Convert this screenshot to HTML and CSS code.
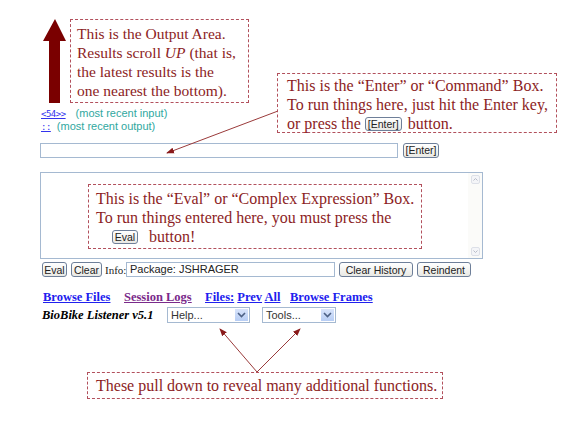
FILE: index.html
```html
<!DOCTYPE html>
<html>
<head>
<meta charset="utf-8">
<link rel="stylesheet" href="styles.css">
</head>
<body>
<div class="page">
  <div class="output-area"></div>
  <div class="hist">
    <div class="hist-line"><a class="hist-link" href="#">&lt;54&gt;&gt;</a><span class="hist-note">(most recent input)</span></div>
    <div class="hist-line"><a class="hist-link" href="#">::</a><span class="hist-note hist-note-tight">(most recent output)</span></div>
  </div>
  <div class="cmd-row">
    <div class="field cmd-field"></div>
    <button class="btn btn-enter">[Enter]</button>
  </div>
  <div class="eval-box">
    <div class="eval-text"></div>
    <div class="scrollbar">
      <span class="sb-arrow"><svg width="9" height="9" viewBox="0 0 9 9"><rect x="0.5" y="0.5" width="8" height="8" rx="1.5" fill="#f4f5f8" stroke="#dde0e8"/><path d="M2.5 5.5 L4.5 3.5 L6.5 5.5" fill="none" stroke="#b8bcc8" stroke-width="1"/></svg></span>
      <span class="sb-arrow"><svg width="9" height="9" viewBox="0 0 9 9"><rect x="0.5" y="0.5" width="8" height="8" rx="1.5" fill="#f4f5f8" stroke="#dde0e8"/><path d="M2.5 3.5 L4.5 5.5 L6.5 3.5" fill="none" stroke="#b8bcc8" stroke-width="1"/></svg></span>
    </div>
  </div>
  <div class="btn-row">
    <button class="btn btn-eval">Eval</button>
    <button class="btn btn-clear">Clear</button>
    <span class="info-label">Info:</span>
    <div class="field info-field">Package: JSHRAGER</div>
    <button class="btn btn-hist">Clear History</button>
    <button class="btn btn-reindent">Reindent</button>
  </div>
  <div class="links">
    <a href="#" class="lnk">Browse Files</a>
    <a href="#" class="lnk visited">Session Logs</a>
    <span class="lnk-group"><a href="#" class="lnk">Files:</a> <a href="#" class="lnk">Prev</a> <a href="#" class="lnk">All</a></span>
    <a href="#" class="lnk">Browse Frames</a>
  </div>
  <div class="tools-row">
    <span class="title">BioBike Listener v5.1</span>
    <div class="select sel-help"><span class="sel-text">Help...</span><span class="sel-btn"><svg width="9" height="6" viewBox="0 0 9 6"><path d="M1 1 L4.5 4.5 L8 1" fill="none" stroke="#4d6185" stroke-width="1.6"/></svg></span></div>
    <div class="select sel-tools"><span class="sel-text">Tools...</span><span class="sel-btn"><svg width="9" height="6" viewBox="0 0 9 6"><path d="M1 1 L4.5 4.5 L8 1" fill="none" stroke="#4d6185" stroke-width="1.6"/></svg></span></div>
  </div>
</div>

<svg class="overlay" width="582" height="422" viewBox="0 0 582 422">
  <defs>
    <marker id="ah" markerWidth="8" markerHeight="8" refX="7" refY="4" orient="auto" markerUnits="userSpaceOnUse">
      <path d="M0 1 L8 4 L0 7 Z" fill="#8a1a1a"/>
    </marker>
  </defs>
  <polygon points="49,103 60,103 60,41 66,41 55,19 43,41 49,41" fill="#7a0000"/>
  <line x1="278" y1="111" x2="167" y2="153" stroke="#9a3a3a" stroke-width="1" marker-end="url(#ah)"/>
  <line x1="257" y1="372" x2="220" y2="329" stroke="#9a3a3a" stroke-width="1" marker-end="url(#ah)"/>
  <line x1="257" y1="372" x2="300" y2="329" stroke="#9a3a3a" stroke-width="1" marker-end="url(#ah)"/>
</svg>

<div class="callout c1">This is the Output Area.<br>Results scroll <i>UP</i> (that is,<br>the latest results is the<br>one nearest the bottom).</div>
<div class="callout c2">This is the “Enter” or “Command” Box.<br>To run things here, just hit the Enter key,<br>or press the <span class="mini-btn">[Enter]</span> button.</div>
<div class="callout c3">This is the “Eval” or “Complex Expression” Box.<br>To run things entered here, you must press the<br><span class="indent"></span><span class="mini-btn">Eval</span><span class="gap"></span>button!</div>
<div class="callout c4">These pull down to reveal many additional functions.</div>
</body>
</html>
```

FILE: styles.css
```css
html, body {
  margin: 0;
  padding: 0;
  background: #ffffff;
}
body {
  width: 582px;
  height: 422px;
  position: relative;
  overflow: hidden;
  font-family: "Liberation Sans", Arial, sans-serif;
}
.page {
  padding-left: 40px;
}
.output-area {
  height: 107px;
}
.hist {
  font-size: 11px;
  line-height: 12px;
}
.hist-line {
  display: flex;
  align-items: baseline;
  padding-left: 1px;
}
.hist-link {
  color: #3333ee;
  font-size: 9px;
  font-family: "DejaVu Sans Mono", monospace;
  letter-spacing: -0.5px;
  text-decoration: underline;
}
.hist-note {
  color: #30a8a0;
  margin-left: 10px;
}
.hist-note-tight {
  margin-left: 6px;
}
.cmd-row {
  display: flex;
  align-items: center;
  gap: 5px;
  margin-top: 9px;
  height: 16px;
}
.field {
  box-sizing: border-box;
  border: 1px solid #a5b9d1;
  background: #fff;
  height: 15px;
  font-size: 11px;
  line-height: 13px;
  padding-left: 3px;
  color: #222;
}
.cmd-field {
  width: 358px;
}
.btn {
  box-sizing: border-box;
  height: 15px;
  border: 1px solid #6e7f99;
  border-radius: 3px;
  background: linear-gradient(#ffffff, #e9e9e4);
  font-family: "Liberation Sans", Arial, sans-serif;
  font-size: 10.5px;
  line-height: 12px;
  padding: 0;
  text-align: center;
  color: #222;
  margin: 0;
}
.btn-enter { width: 36px; }
.eval-box {
  box-sizing: border-box;
  margin-top: 14px;
  width: 443px;
  height: 87px;
  border: 1px solid #a5b9d1;
  display: flex;
}
.eval-text { flex: 1; }
.scrollbar {
  width: 14px;
  display: flex;
  flex-direction: column;
  justify-content: space-between;
  align-items: center;
  padding: 2px 0;
  background: #fbfbf9;
}
.sb-arrow {
  display: flex;
}
.btn-row {
  display: flex;
  align-items: center;
  margin-top: 3px;
  height: 15px;
  padding-left: 2px;
}
.btn-eval { width: 25px; }
.btn-clear { width: 31px; margin-left: 4px; }
.info-label {
  font-family: "Liberation Serif", serif;
  font-size: 11px;
  margin-left: 3px;
  width: 21px;
  color: #222;
}
.info-field {
  width: 209px;
}
.btn-hist { width: 74px; margin-left: 4px; }
.btn-reindent { width: 54px; margin-left: 4px; }
.links {
  display: flex;
  align-items: baseline;
  margin-top: 13px;
  padding-left: 3px;
  font-family: "Liberation Serif", serif;
  font-weight: bold;
  font-size: 12.5px;
  line-height: 14px;
}
.lnk {
  color: #2020ee;
  text-decoration: underline;
}
.lnk.visited { color: #7a2a8a; }
.links > :nth-child(1) { width: 81px; }
.links > :nth-child(2) { width: 81px; }
.lnk-group { width: 85px; }
.tools-row {
  display: flex;
  align-items: center;
  margin-top: 3px;
  height: 16px;
  padding-left: 2px;
}
.title {
  font-family: "Liberation Serif", serif;
  font-weight: bold;
  font-style: italic;
  font-size: 12.5px;
  width: 125px;
}
.select {
  box-sizing: border-box;
  height: 16px;
  border: 1px solid #a5b9d1;
  background: #fff;
  display: flex;
  align-items: stretch;
  font-size: 11px;
}
.sel-help { width: 83px; }
.sel-tools { width: 74px; margin-left: 12px; }
.sel-text {
  flex: 1;
  padding-left: 3px;
  line-height: 14px;
  color: #333;
}
.sel-btn {
  width: 13px;
  margin: 1px;
  background: linear-gradient(#d8e4fb, #b7cdf4);
  display: flex;
  align-items: center;
  justify-content: center;
}
.overlay {
  position: absolute;
  left: 0;
  top: 0;
  pointer-events: none;
}
.callout {
  position: absolute;
  box-sizing: border-box;
  border: 1px dashed #b2505c;
  background: #fff;
  color: #8c1d24;
  font-family: "Liberation Serif", "Times New Roman", serif;
  font-size: 16px;
  line-height: 19px;
  white-space: nowrap;
}
.c1 { left: 70px; top: 19px; width: 179px; height: 84px; padding: 4px 6px; font-size: 15.5px; }
.c2 { left: 277px; top: 73px; width: 280px; height: 60px; padding: 2px 9px; }
.c3 { left: 88px; top: 184px; width: 334px; height: 65px; padding: 4px 7px; }
.c4 { left: 87px; top: 372px; width: 356px; height: 27px; padding: 3px 8px; }
.mini-btn {
  display: inline-block;
  box-sizing: border-box;
  height: 14px;
  border: 1px solid #6e7f99;
  border-radius: 3px;
  background: linear-gradient(#ffffff, #e9e9e4);
  font-family: "Liberation Sans", Arial, sans-serif;
  font-size: 10.5px;
  line-height: 12px;
  padding: 0;
  text-align: center;
  color: #222;
  vertical-align: 1px;
}
.c2 .mini-btn { width: 37px; margin-right: 2px; }
.c3 .mini-btn { width: 26px; }
.indent { display: inline-block; width: 16px; }
.gap { display: inline-block; width: 11px; }
```
